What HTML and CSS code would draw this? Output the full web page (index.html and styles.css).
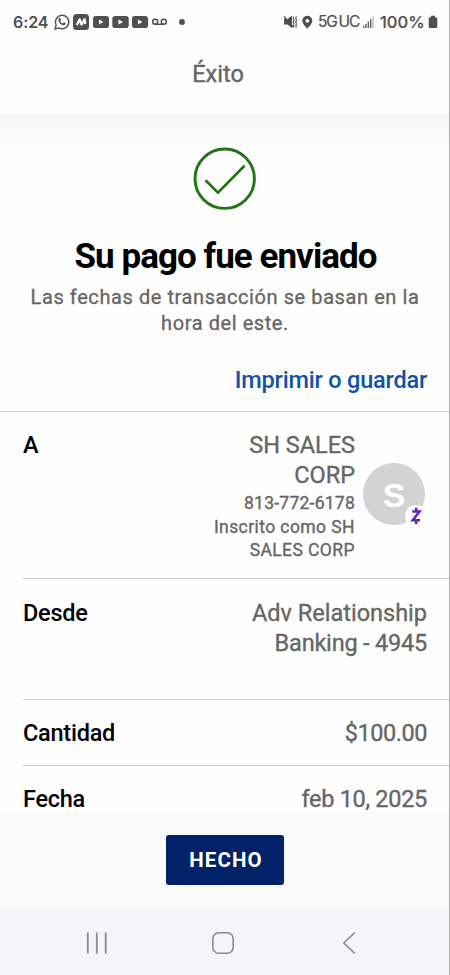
FILE: index.html
```html
<!DOCTYPE html>
<html lang="es">
<head>
<meta charset="utf-8">
<meta name="viewport" content="width=device-width, initial-scale=1">
<title>Éxito</title>
<link rel="stylesheet" href="styles.css">
</head>
<body>
<div class="phone">
  <div class="status">
    <span class="clock">6:24</span>
    <svg class="status-left" width="134" height="18" viewBox="0 0 134 18">
      <g fill="none" stroke="#505050" stroke-width="1.4">
        <path d="M2.1 15.9l1-3.9a6.7 6.7 0 1 1 2.8 2.9z"/>
      </g>
      <path fill="#505050" d="M5.7 5.3c.7-.8 1.400-.6 1.700.1l.5 1.300c.1.400-.5.900-.7 1.200.6 1.200 1.500 2 2.700 2.500l.9-.9c.3-.2 1.700.6 1.900.8.300.8-.7 2-1.900 2-3 0-6.500-3.800-5.100-7z"/>
      <rect x="20" y="1" width="16" height="16" rx="3.500" fill="#505050"/>
      <path fill="none" stroke="#fff" stroke-width="2.300" stroke-linejoin="round" d="M23.800 12l2.900-5.500 1.900 5 3-5.200 .6 4.800"/>
      <g fill="#505050"><rect x="40" y="3" width="16" height="12" rx="2.800"/><rect x="59.300" y="3" width="16.400" height="12" rx="2.800"/><rect x="79" y="3" width="16" height="12" rx="2.800"/></g>
      <path fill="#fff" d="M46 6.400v5.200l4.500-2.600zM65.500 6.400v5.200l4.500-2.600zM85 6.400v5.200l4.500-2.600z"/>
      <g fill="none" stroke="#505050" stroke-width="1.500"><circle cx="102.200" cy="8.700" r="2.500"/><circle cx="110.800" cy="8.700" r="2.500"/><path d="M102 11.300h9"/></g>
      <circle cx="129" cy="9" r="2.900" fill="#505050"/>
    </svg>
    <svg class="status-mid" width="30" height="16" viewBox="0 0 30 16">
      <path fill="#505050" d="M1 5h3.500l4.500-3.500v12.500l-4.500-3.500H1z"/>
      <path d="M1 2.500l9 10.500" stroke="#505050" stroke-width="1.500"/>
      <path d="M11 2.500l-.8 1.800.8 1.900-.8 1.900.8 1.900-.8 1.900.8 1.600M13.500 2.500l-.8 1.800.8 1.900-.8 1.900.8 1.900-.8 1.900.8 1.600" fill="none" stroke="#505050" stroke-width="1.100"/>
      <path fill="#505050" fill-rule="evenodd" d="M24.300 1.800a5 5 0 0 1 5 5c0 3.300-5 7.700-5 7.700s-5-4.400-5-7.700a5 5 0 0 1 5-5zm0 3.100a1.900 1.900 0 1 0 0 3.800 1.900 1.900 0 0 0 0-3.800z"/>
    </svg>
    <span class="network">5G<span class="uc">UC</span></span>
    <svg class="signal" width="13" height="14" viewBox="0 0 13 14">
      <g fill="#606060"><rect x="1" y="10.500" width="1.200" height="2.500"/><rect x="3.200" y="9" width="1.400" height="4"/><rect x="5.600" y="6.500" width="1.400" height="6.500"/><rect x="8" y="4" width="1.400" height="9"/></g>
      <rect x="10.300" y="1.500" width="1.500" height="11.500" fill="#bdbdbd"/>
    </svg>
    <span class="percent">100%</span>
    <svg class="battery" width="10" height="14" viewBox="0 0 10 14"><path fill="#505050" d="M3 .8h4v1.400h.8a1.500 1.500 0 0 1 1.500 1.500v7.800a1.500 1.500 0 0 1-1.500 1.500H2.200a1.500 1.500 0 0 1-1.500-1.500V3.700a1.500 1.500 0 0 1 1.500-1.500H3z"/></svg>
  </div>

  <header class="header"><span class="header-title">Éxito</span></header>

  <main class="content">
    <section class="hero">
      <svg class="check" width="64" height="64" viewBox="0 0 64 64" fill="none" stroke="#237414">
        <circle cx="31.700" cy="31.700" r="29.700" stroke-width="2.900"/>
        <path d="M12.500 33.200l12.500 12.500 26.500-27" stroke-width="2.700"/>
      </svg>
      <h1 class="title">Su pago fue enviado</h1>
      <p class="note">Las fechas de transacción se basan en la<br>hora del este.</p>
      <a class="save">Imprimir o guardar</a>
    </section>

    <dl class="details">
      <div class="row row-to">
        <dt>A</dt>
        <dd class="payee">
          <div class="payee-text">
            <div class="name">SH SALES<br>CORP</div>
            <div class="phone-no">813-772-6178</div>
            <div class="enrolled">Inscrito como SH<br>SALES CORP</div>
          </div>
          <div class="avatar">S
            <svg class="zelle" width="22" height="22" viewBox="0 0 22 22">
              <circle cx="11" cy="11" r="11" fill="#fff"/>
              <path d="M7.200 6.500h7.300l-6.800 8.700h7.300M11.200 2.800v3.500M11.200 15.500v3.600" fill="none" stroke="#6420b4" stroke-width="2.500"/>
            </svg>
          </div>
        </dd>
      </div>
      <div class="row row-from"><dt>Desde</dt><dd>Adv Relationship<br><span class="account">Banking - 4945</span></dd></div>
      <div class="row row-amount"><dt>Cantidad</dt><dd>$100.00</dd></div>
      <div class="row row-date"><dt>Fecha</dt><dd>feb 10, 2025</dd></div>
    </dl>
  </main>

  <footer class="actions"><button class="done">HECHO</button></footer>
  <nav class="nav">
    <svg width="22" height="24" viewBox="0 0 22 24" stroke="#8b8b8d" stroke-width="1.800"><path d="M1.800 1.500v21M10.800 1.500v21M19.700 1.500v21"/></svg>
    <svg class="home" width="24" height="24" viewBox="0 0 24 24" fill="none" stroke="#8b8b8d" stroke-width="1.600"><rect x="1.800" y="1.800" width="20.400" height="20.400" rx="6"/></svg>
    <svg width="14" height="24" viewBox="0 0 14 24" fill="none" stroke="#8b8b8d" stroke-width="1.600"><path d="M12.800 1.500L1.800 12l11 10.500"/></svg>
  </nav>
</div>
</body>
</html>
```
FILE: styles.css
```css
* { box-sizing: border-box; }
body { margin: 0; background: #fff; font-family: Roboto, sans-serif; }
.phone {
  width: 450px;
  height: 975px;
  display: flex;
  flex-direction: column;
  overflow: hidden;
  border-right: 1px solid #b4b4b4;
  background: #fefefe;
}
.status {
  height: 43px;
  flex: none;
  display: flex;
  align-items: center;
  padding: 0 11px 0 13px;
  color: #505050;
  font-family: Inter, sans-serif;
  white-space: nowrap;
}
.clock { width: 40px; font-size: 16px; font-weight: 600; letter-spacing: -0.1px; }
.status-left { flex: none; }
.status-mid { flex: none; margin-left: 96px; }
.network { margin-left: 5px; width: 41px; font-size: 15.500px; font-weight: 400; letter-spacing: -1.2px; -webkit-text-stroke: 0.2px #505050; }
.uc { margin-left: 2px; }
.signal { flex: none; margin-left: 3px; }
.percent { margin-left: 5px; width: 47px; font-size: 16.500px; font-weight: 500; -webkit-text-stroke: 0.2px #505050; }
.battery { flex: none; margin-left: auto; }

.header { height: 71px; flex: none; text-align: center; }
.header-title {
  display: block;
  padding: 16px 13px 0 0;
  font-size: 23.500px;
  line-height: 30px;
  color: #666;
  -webkit-text-stroke: 0.4px #666;
}
.content { flex: 1; min-height: 0; overflow: hidden; }
.hero {
  height: 298px;
  display: flex;
  flex-direction: column;
  align-items: center;
  padding-top: 33px;
  border-bottom: 1px solid #cfcfcf;
  background: linear-gradient(#f4f4f4, #fafafa 20px, #fefefe 38px);
}
.check { flex: none; }
.title { margin: 26px 0 0; padding-left: 2px; font-size: 35px; line-height: 40px; font-weight: 700; letter-spacing: -0.95px; color: #000; white-space: nowrap; }
.note { margin: 7px 0 0; padding-left: 1px; font-size: 20px; line-height: 26px; letter-spacing: 0.58px; color: #666; text-align: center; white-space: nowrap; -webkit-text-stroke: 0.3px #666; }
.save { align-self: flex-end; margin: 27px 22px 0 0; font-size: 23.500px; line-height: 34px; font-weight: 500; letter-spacing: -0.2px; color: #1053a5; }

.details { margin: 0; }
.row {
  margin-left: 23px;
  padding-right: 22px;
  display: flex;
  justify-content: space-between;
  border-bottom: 1px solid #cfcfcf;
  font-size: 23.500px;
  line-height: 30px;
}
.row dt { color: #000; font-weight: 500; letter-spacing: -0.25px; }
.row dd { margin: 0; color: #666; text-align: right; -webkit-text-stroke: 0.35px #666; }
.row-to { height: 167px; padding-top: 18px; }
.row-from { height: 121px; padding-top: 19px; }
.account { letter-spacing: -0.2px; }
.row-amount { height: 66px; padding-top: 18px; }
.row-date { height: 66px; padding-top: 18px; }
.row-amount dd { letter-spacing: -0.45px; }
.row-date dd { letter-spacing: -0.3px; }
.payee { display: flex; gap: 8px; padding-right: 2px; }
.phone-no { font-size: 17.500px; line-height: 26px; letter-spacing: 0.25px; }
.enrolled { font-size: 17.500px; line-height: 23px; letter-spacing: 0.42px; }
.avatar {
  position: relative;
  width: 62px;
  height: 62px;
  margin-top: 33px;
  border-radius: 50%;
  background: #d3d3d3;
  color: #fff;
  font: 700 34px/64px "Liberation Sans", sans-serif;
  text-align: center;
  -webkit-text-stroke: 0;
}
.zelle { position: absolute; left: 42px; top: 42px; }

.actions { height: 96px; flex: none; display: flex; justify-content: center; padding-top: 23px; background: #fafafa; }
.done {
  width: 118px;
  height: 50px;
  border: 0;
  border-radius: 3px;
  padding: 0 0 0 3px;
  background: #012169;
  color: #fff;
  font: 700 20.500px/50px Roboto, sans-serif;
  letter-spacing: 1.100px;
}
.nav { height: 67px; flex: none; display: flex; align-items: center; justify-content: space-between; padding: 3px 93px 0 86px; background: #f5f5f8; }
.home { margin-right: 4px; }
```
